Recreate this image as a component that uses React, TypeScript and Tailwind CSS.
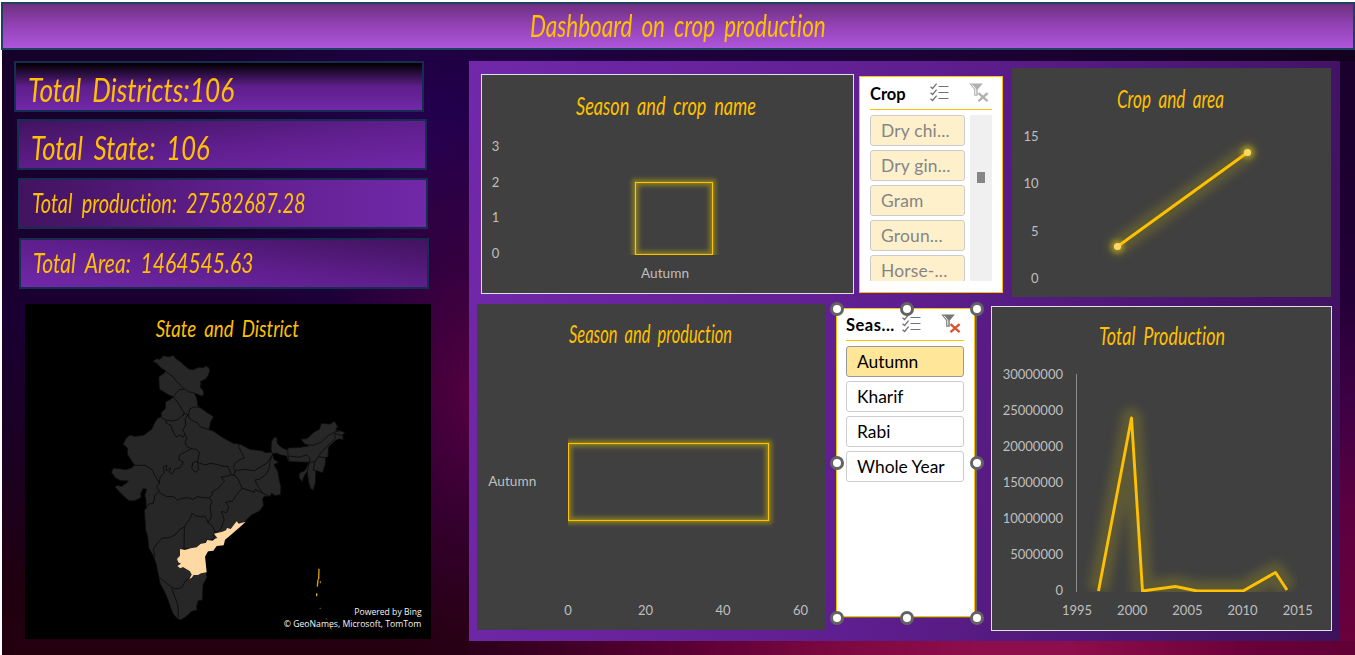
import React from "react";

const SCRIPT = "Lato, 'Open Sans', sans-serif";

function ChartTitle({ x, y, w, size, children }: { x: number; y: number; w: number; size: number; children: string }) {
  return (
    <text x={x} y={y} fontSize={size} textLength={w} lengthAdjust="spacingAndGlyphs" fontFamily={SCRIPT} fontStyle="italic" fill="#ffc000" className="[font-variant-ligatures:none] [word-spacing:.2em]">
      {children}
    </text>
  );
}

function Label({ x, y, anchor = "middle", w, children }: { x: number; y: number; anchor?: "start" | "middle" | "end"; w?: number; children: string }) {
  return (
    <text x={x} y={y} fontSize={13} textAnchor={anchor} textLength={w} lengthAdjust="spacingAndGlyphs" fontFamily={SCRIPT} fill="#bfbfbf">
      {children}
    </text>
  );
}

function Checklist() {
  return (
    <svg width="19" height="19" viewBox="0 0 19 19" fill="none" stroke="#737373" strokeWidth="1.1">
      <path d="M8.5 3.5H18.5M8.5 9.5H18.5M8.5 15.5H18.5" />
      <path d="M.5 3.7 2.6 5.5 6.6.7M.5 9.7 2.6 11.5 6.6 6.7M.5 15.7 2.6 17.5 6.6 12.7" strokeWidth="1.3" />
    </svg>
  );
}

function ClearFilter({ funnel, cross }: { funnel: string; cross: string }) {
  return (
    <svg width="20" height="20" viewBox="0 0 20 20" fill="none">
      <path d="M.2.5H13.8L8.7 6.6V12.8H5.2V6.6Z" fill={funnel} />
      <path d="M3 1.7 6.8 6.2V11.6" stroke="#fff" strokeWidth="1" />
      <path d="M9.5 10.2 18.6 18.2M18.6 10.2 9.5 18.2" stroke={cross} strokeWidth="2.3" />
    </svg>
  );
}

function Handle({ pos }: { pos: string }) {
  return <span className={`absolute size-[14px] rounded-full border-[3px] border-[#636363] bg-white ${pos}`} />;
}

function IndiaMap() {
  return (
    <svg className="block h-[335px] w-[406px]" viewBox="15 12 1218 1005">
      <g fill="#272727" stroke="#0b0b0b" strokeWidth="2.5" strokeLinejoin="round">
        <path d="M398 184 410 176 420 178 430 167 450 170 460 165 468 176 480 184 495 198 507 207 520 209 535 202 550 203 556 198 566 202 570 211 564 228 556 238 542 244 543 252 541 262 549 270 552 282 546 289 535 284 524 281 530 293 534 318 543 324 560 337 581 350 572 365 567 389 580 393 607 412 640 430 660 432 690 448 725 452 738 458 754 456 758 463 762 478 776 487 762 494 774 515 778 540 783 562 782 584 765 587 755 580 750 589 732 590 728 598 731 616 720 632 695 645 675 664 660 680 632 705 615 720 612 735 585 740 578 752 562 757 556 772 559 817 561 832 549 855 548 900 535 902 530 918 531 931 515 934 498 950 482 960 472 957 458 940 448 911 436 880 420 850 416 830 408 790 400 768 386 743 383 710 377 690 373 630 378 625 378 602 374 585 380 568 370 566 362 580 364 592 345 602 328 603 310 588 285 562 291 556 305 559 320 548 325 543 302 542 286 534 274 517 280 504 298 506 318 509 335 503 343 495 322 463 322 444 309 433 318 415 330 405 345 409 370 406 395 388 405 365 414 354 424 350 423 338 437 325 436 306 448 300 460 291 445 284 418 268 416 230 432 220 436 212 422 203 410 190Z" />
        <path d="M754 456 753 446 754 426 762 412 771 412 772 430 784 442 801 450 803 444 840 442 865 438 852 430 842 417 860 416 882 396 898 388 904 370 930 372 944 364 953 380 947 390 960 392 975 397 968 405 970 420 957 416 944 424 926 441 924 470 917 474 916 492 908 518 888 512 886 550 880 571 872 566 865 545 862 515 854 526 846 546 837 532 838 519 854 512 868 487 805 485 800 469 780 464 768 459 760 462Z" />
      </g>
      <g fill="none" stroke="#0a0a0a" strokeWidth="2.5" strokeLinejoin="round">
        <path d="M436 213 460 231 468 243 487 260 495 268 507 276 519 278 540 288M460 291 467 280 480 268 493 268M460 291 470 303 480 318 493 340 505 345 510 326 525 320 543 324" />
        <path d="M424 353 437 360 460 363 474 358 493 340 489 348M437 360 440 370 453 376 458 393 468 411 478 406 490 411 495 400 488 391 497 375 495 355 504 345 508 355 519 363 532 368 540 380 567 389" />
        <path d="M495 403 501 415 495 428 502 441 514 446M514 446 480 464 475 479 490 486 480 503 465 507 456 523 447 516 452 504 438 512 440 496 430 500 432 520 420 531 418 550M514 446 530 448 538 458 533 484 536 510 525 517 515 504 519 487 533 484" />
        <path d="M343 496 375 496 395 508 418 550 410 560 418 574 405 585 400 610 386 612 378 625M533 487 555 495 570 490 590 493 606 498 625 500 634 525 646 526" />
        <path d="M418 578 440 590 460 589 472 601 485 595 505 593 518 598 532 590 550 593 568 594 577 584 576 576 590 568 605 553 614 544 603 532 634 525" />
        <path d="M568 594 576 604 570 620 574 650 564 668 576 676 585 695 592 696 603 686 608 672 613 660 604 634 620 638 626 620 617 607 638 603 650 584 666 565" />
        <path d="M657 432 656 442 662 452 673 474 660 478 645 490 640 503 646 512 641 525 654 536 666 565 684 570 703 577 705 568 728 579 745 588M645 512 675 508 703 512 740 490 758 463M758 463 750 485 747 507 738 523 718 538 705 540 710 552 728 579" />
        <path d="M400 748 413 728 427 714 444 714 465 705 480 688 493 681 492 746 480 750M493 681 500 670 510 656 516 640 526 647 545 651 554 648 560 657 564 668M585 695 580 706 584 717 562 722 554 730 540 731 532 742 510 747 492 746M400 748 405 770" />
        <path d="M418 832 440 850 452 860 465 867 485 863 497 842 510 832M455 865 462 884 470 904 475 926 474 956" />
        <path d="M803 444 804 466 808 485M808 468 835 472 860 465 870 474 868 487 862 515M852 434 880 436 904 426 925 407 946 395 960 392M868 487 885 485 895 470 905 455 926 435 946 415 944 400 970 408M885 485 880 510 888 512M895 470 924 474" />
      </g>
      <path d="M480 747 495 750 512 745 530 742 542 731 557 729 562 720 578 722 585 716 592 714 582 701 607 695 618 691 621 684 632 687 650 664 656 671 677 665 660 681 633 704 615 719 611 736 590 738 580 752 564 754 555 770 560 817 543 820 534 825 521 825 515 833 508 837 515 824 510 814 495 805 489 801 481 805 472 798 483 791 475 787 471 777 480 767Z" fill="#ffd9a3" />
      <g fill="none" stroke="#d9a300" strokeWidth="4">
        <path d="M897 806 896 838M894 838 892 860M890 880V889" />
        <path d="M901 843V850M899 925H902M918 955 921 958M930 978 934 988" strokeWidth="2.5" />
      </g>
      <g fill="#f5f5f5" fontFamily="'Open Sans', 'Noto Sans', sans-serif" fontSize="26.5">
        <text x="1003" y="945" textLength="202" lengthAdjust="spacingAndGlyphs">Powered by Bing</text>
        <text x="791" y="981" textLength="413" lengthAdjust="spacingAndGlyphs">© GeoNames, Microsoft, TomTom</text>
      </g>
      <ChartTitle x={407} y={112} w={430} size={72}>State and District</ChartTitle>
    </svg>
  );
}

function Stat({ box, text, children }: { box: string; text: string; children: string }) {
  return (
    <div className={`flex h-[51px] w-[410px] shrink-0 items-center border-2 border-[#172c51] pl-3 text-[#ffc000] ${box}`}>
      <span className={`origin-left [word-spacing:6px] whitespace-pre italic [font-variant-ligatures:none] ${text}`}>{children}</span>
    </div>
  );
}

const crops = ["Dry chi...", "Dry gin...", "Gram", "Groun...", "Horse-..."];
const seasons = ["Autumn", "Kharif", "Rabi", "Whole Year"];

export default function App() {
  return (
    <div className="h-[655px] w-[1355px] overflow-hidden bg-white pt-[2px] pl-px font-['Lato','Open_Sans',sans-serif]">
      <header className="flex h-12 w-[1354px] items-center border-2 border-[#1f4060] bg-[linear-gradient(180deg,#6e2f80,#9443b6_50%,#ae55da)] pl-[527px] text-[#ffc000]">
        <h1 className="mb-[3px] origin-left scale-x-[.75] [word-spacing:5px] text-[30px] leading-none whitespace-pre italic [font-variant-ligatures:none]">Dashboard on crop production</h1>
      </header>

      <main className="ml-px flex h-[605px] w-[1353px] items-start bg-[linear-gradient(90deg,#20000c,#2a001b_34%,#5c0034_51%,#7a0840_61%,#8e0d4c_72%,#8e0d4c_79%,#680038_93%,#600036)]">
        <aside className="flex h-[605px] w-[467px] shrink-0 flex-col items-start bg-[radial-gradient(ellipse_150px_290px_at_100%_57%,#520040,#4800408c_45%,#30003000),radial-gradient(ellipse_260px_260px_at_92%_14%,#240050,#22004a88_50%,#1a003000),linear-gradient(180deg,#16002a,#1a0032_45%,#1c001c_75%,#20000e_90%,#24000f)] pt-[11px]">
          <Stat box="ml-3 bg-[linear-gradient(180deg,#000,#5e1e8b_50%,#7128a8)]" text="mt-[6px] text-[32px] scale-x-[.82]">Total Districts:106</Stat>
          <Stat box="mt-[7px] ml-[15px] bg-[linear-gradient(to_bottom_right,#42135f,#5e1e8b_50%,#7128a8)]" text="mt-[6px] text-[32px] scale-x-[.8]">Total State: 106</Stat>
          <Stat box="mt-2 ml-4 bg-[linear-gradient(90deg,#42135f,#5e1e8b_50%,#7128a8)]" text="-mt-[1px] text-[27px] scale-x-[.74]">Total production: 27582687.28</Stat>
          <Stat box="mt-[9px] ml-[17px] bg-[linear-gradient(to_bottom_left,#42135f,#5e1e8b_50%,#7128a8)]" text="-mt-[1px] text-[27px] scale-x-[.78]">Total Area: 1464545.63</Stat>
          <section className="mt-[15px] ml-[23px] h-[335px] w-[406px] bg-black">
            <IndiaMap />
          </section>
        </aside>

        <div className="h-[591px] w-[886px] bg-[linear-gradient(180deg,#1a002c,#1c0030_20%,#240038_42%,#3e0044_60%,#5c0040_78%,#6a003c)]">
          <div className="h-[11px] bg-[linear-gradient(90deg,#200042,#1c0034_60%,#14001e)]" />
          <section className="h-[580px] w-[871px] bg-[linear-gradient(98deg,#7128aa,#5e1e8e_50%,#3d115c)]">
            <div className="flex h-[243px] items-start">
              <div className="mt-[13px] ml-3 h-[220px] w-[373px] bg-[#404040]">
                <svg className="block" width="373" height="220" viewBox="481 74 373 220">
                  <defs>
                    <filter id="glow" x="-20%" y="-20%" width="140%" height="140%" colorInterpolationFilters="sRGB"><feGaussianBlur stdDeviation="2.3" /></filter>
                    <clipPath id="above"><rect x="481" y="74" width="373" height="181" /></clipPath>
                  </defs>
                  <rect x="481.5" y="74.5" width="372" height="219" fill="none" stroke="#e0dfe2" />
                  <ChartTitle x={576} y={115} w={180} size={25}>Season and crop name</ChartTitle>
                  <Label x={495.5} y={151}>3</Label>
                  <Label x={495.5} y={187}>2</Label>
                  <Label x={495.5} y={222}>1</Label>
                  <Label x={495.5} y={258}>0</Label>
                  <g clipPath="url(#above)" fill="none">
                    <rect x="635.5" y="182.5" width="77" height="72" stroke="#8a7f20" strokeWidth="7" opacity=".85" filter="url(#glow)" />
                    <rect x="635.5" y="182.5" width="77" height="72" stroke="#ffc000" strokeWidth="1.2" />
                  </g>
                  <Label x={665} y={278} w={48}>Autumn</Label>
                </svg>
              </div>

              <div className="mt-[15px] ml-[5px] h-[217px] w-[144px] border border-[#ffc000] bg-white px-[10px]">
                <div className="relative flex h-[33px] w-[122px] border-b border-[#ffc000]">
                  <span className="mt-[7px] text-[16.5px] leading-5 font-bold">Crop</span>
                  <span className="absolute top-[6px] left-[60px]"><Checklist /></span>
                  <span className="absolute top-[6px] left-[99px]"><ClearFilter funnel="#b0b0b0" cross="#b0b0b0" /></span>
                </div>
                <div className="mt-[5px] flex h-[166px] gap-[5px] overflow-hidden">
                  <div className="flex flex-col gap-1">
                    {crops.map((c) => (
                      <div key={c} className="flex h-[31px] w-[95px] shrink-0 items-center rounded-[3px] border border-[#cccccc] bg-[#fff0cc] pt-[2px] pl-[10px] text-[17.4px] tracking-[.2px] whitespace-nowrap text-[#858585]">{c}</div>
                    ))}
                  </div>
                  <div className="w-[22px] bg-[#f0f0f0] pt-[57px] pl-[7px]"><div className="h-[11px] w-2 bg-[#868686]" /></div>
                </div>
              </div>

              <div className="mt-[7px] ml-[9px] h-[229px] w-[319px] bg-[#404040]">
                <svg className="block" width="319" height="229" viewBox="1012 68 319 229">
                  <defs>
                    <filter id="wide" x="-30%" y="-30%" width="160%" height="160%" colorInterpolationFilters="sRGB"><feGaussianBlur stdDeviation="4.5" /></filter>
                    <filter id="dot" x="-100%" y="-100%" width="300%" height="300%" colorInterpolationFilters="sRGB"><feGaussianBlur stdDeviation="2.5" /></filter>
                  </defs>
                  <ChartTitle x={1117} y={108} w={107} size={25}>Crop and area</ChartTitle>
                  <Label x={1038.5} y={141} anchor="end">15</Label>
                  <Label x={1038.5} y={188} anchor="end">10</Label>
                  <Label x={1038.5} y={236} anchor="end">5</Label>
                  <Label x={1038.5} y={283} anchor="end">0</Label>
                  <path d="M1117.5 246.5 1247.5 152.5" stroke="#5d5935" strokeWidth="19" strokeLinecap="round" filter="url(#wide)" />
                  <g fill="#9e9320" filter="url(#dot)"><circle cx="1117.5" cy="246.5" r="6.5" /><circle cx="1247.5" cy="152.5" r="6.5" /></g>
                  <path d="M1117.5 246.5 1247.5 152.5" stroke="#ffc000" strokeWidth="2.9" />
                  <g fill="#ffd768"><circle cx="1117.5" cy="246.5" r="3.6" /><circle cx="1247.5" cy="152.5" r="3.6" /></g>
                </svg>
              </div>
            </div>

            <div className="flex items-start">
              <div className="ml-2 h-[326px] w-[349px] bg-[#404040]">
                <svg className="block" width="349" height="326" viewBox="477 304 349 326">
                  <defs><clipPath id="right"><rect x="568" y="400" width="258" height="160" /></clipPath></defs>
                  <ChartTitle x={569} y={343} w={163} size={25}>Season and production</ChartTitle>
                  <Label x={512.3} y={486} w={48}>Autumn</Label>
                  <g clipPath="url(#right)" fill="none">
                    <rect x="568.5" y="443.5" width="200" height="77" stroke="#8a7f20" strokeWidth="7" opacity=".85" filter="url(#glow)" />
                    <rect x="568.5" y="443.5" width="200" height="77" stroke="#ffc000" strokeWidth="1.2" />
                  </g>
                  <Label x={568} y={615}>0</Label>
                  <Label x={645.5} y={615}>20</Label>
                  <Label x={723} y={615}>40</Label>
                  <Label x={800.5} y={615}>60</Label>
                </svg>
              </div>

              <div className="relative mt-[4px] ml-[10px] h-[310px] w-[141px] border-r-2 border-b border-[#636363]">
                <div className="h-[309px] w-[139px] border border-[#ffc000] bg-white px-[9px]">
                  <div className="relative flex h-8 w-[118px] border-b border-[#ffc000]">
                    <span className="mt-[6px] text-[16.5px] leading-5 font-bold tracking-[.5px]">Seas...</span>
                    <span className="absolute top-[5px] left-[56px]"><Checklist /></span>
                    <span className="absolute top-[5px] left-[95px]"><ClearFilter funnel="#757575" cross="#d9532c" /></span>
                  </div>
                  <div className="mt-[5px] flex flex-col gap-1">
                    {seasons.map((s, i) => (
                      <div key={s} className={`flex h-[31px] w-[118px] items-center rounded-[3px] border pt-[2px] pl-[10px] text-[17.4px] whitespace-nowrap ${i === 0 ? "border-[#999999] bg-[#ffe699]" : "border-[#cccccc] bg-white"}`}>{s}</div>
                    ))}
                  </div>
                </div>
                <Handle pos="-left-[6px] -top-[6px]" />
                <Handle pos="left-[64px] -top-[6px]" />
                <Handle pos="left-[134px] -top-[6px]" />
                <Handle pos="-left-[6px] top-[148px]" />
                <Handle pos="left-[134px] top-[148px]" />
                <Handle pos="-left-[6px] top-[303px]" />
                <Handle pos="left-[64px] top-[303px]" />
                <Handle pos="left-[134px] top-[303px]" />
              </div>

              <div className="mt-[2px] ml-[14px] h-[325px] w-[341px] bg-[#404040]">
                <svg className="block" width="341" height="325" viewBox="991 306 341 325">
                  <defs><clipPath id="plot"><rect x="1077" y="374" width="221" height="218" /></clipPath></defs>
                  <rect x="991.5" y="306.5" width="340" height="324" fill="none" stroke="#e0dfe2" />
                  <ChartTitle x={1099} y={345} w={126} size={25}>Total Production</ChartTitle>
                  {["30000000", "25000000", "20000000", "15000000", "10000000", "5000000", "0"].map((v, i) => (
                    <Label key={v} x={1063} y={379 + i * 36} anchor="end">{v}</Label>
                  ))}
                  {["1995", "2000", "2005", "2010", "2015"].map((v, i) => (
                    <Label key={v} x={1077 + i * 55.2} y={615}>{v}</Label>
                  ))}
                  <path d="M1076.5 374V592" stroke="#8c8c8c" />
                  <g clipPath="url(#plot)" fill="none" strokeLinejoin="round">
                    <path d="M1098.5 591 1131.5 418 1142.5 591 1175.5 586.5 1197 591H1243L1275.5 572.5 1287 590" stroke="#5d5935" strokeWidth="21" filter="url(#wide)" />
                    <path d="M1098.5 591 1131.5 418 1142.5 591 1175.5 586.5 1197 591H1243L1275.5 572.5 1287 590" stroke="#ffc000" strokeWidth="2.9" />
                  </g>
                </svg>
              </div>
            </div>
          </section>
        </div>
      </main>
    </div>
  );
}
